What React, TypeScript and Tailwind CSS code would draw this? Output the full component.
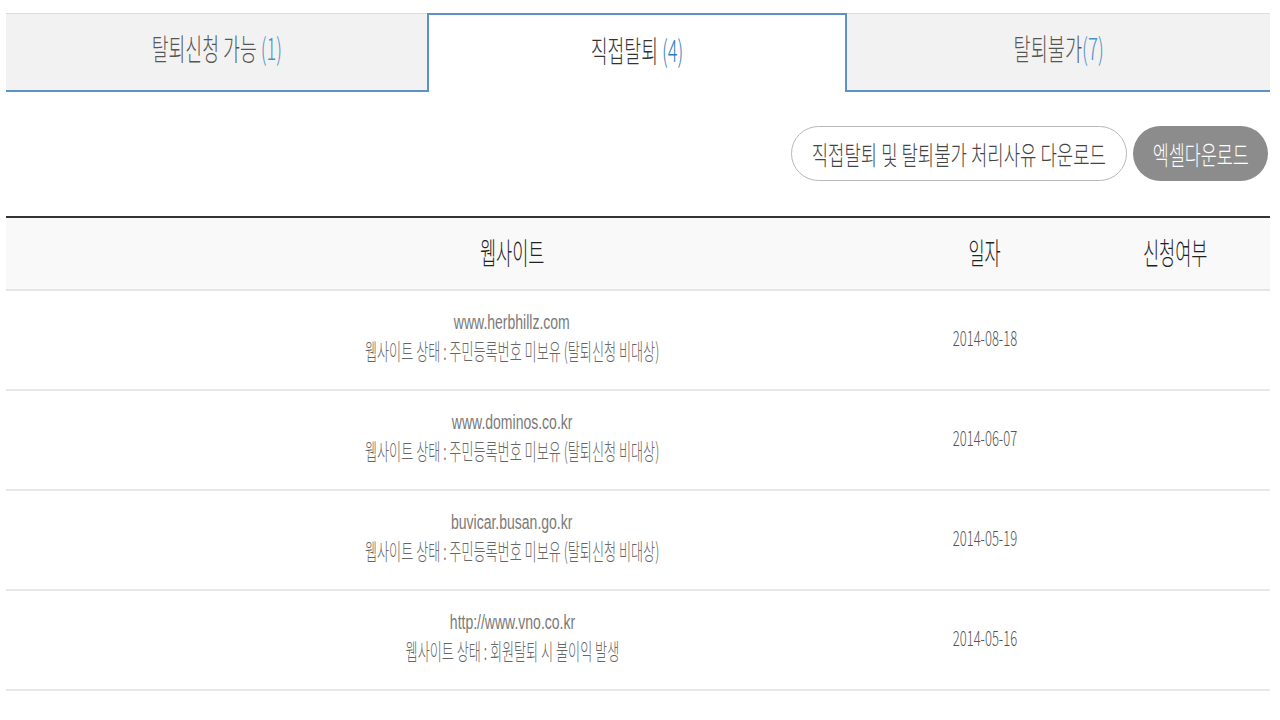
import React from "react";

const F = { fontFamily: '"Noto Sans CJK KR", "Noto Sans", sans-serif' };
const L = { fontFamily: '"Liberation Sans", Arial, sans-serif' };

function S({ children, className = "" }: { children: React.ReactNode; className?: string }) {
  return (
    <span className={"inline-block whitespace-nowrap origin-center " + className}>
      {children}
    </span>
  );
}

const rows = [
  { url: "www.herbhillz.com", status: "웹사이트 상태 : 주민등록번호 미보유 (탈퇴신청 비대상)", date: "2014-08-18" },
  { url: "www.dominos.co.kr", status: "웹사이트 상태 : 주민등록번호 미보유 (탈퇴신청 비대상)", date: "2014-06-07" },
  { url: "buvicar.busan.go.kr", status: "웹사이트 상태 : 주민등록번호 미보유 (탈퇴신청 비대상)", date: "2014-05-19" },
  { url: "http://www.vno.co.kr", status: "웹사이트 상태 : 회원탈퇴 시 불이익 발생", date: "2014-05-16" },
];

export default function App() {
  return (
    <div className="w-[1280px] h-[720px] overflow-hidden bg-white pl-[6px] pr-[10px] font-light" style={F}>
      {/* Tabs */}
      <div className="mt-[13px] flex h-[79px]">
        <div className="w-[421px] flex items-center justify-center pb-[11px] bg-[#f2f2f2] border-t border-t-[#dcdcdc] border-b-2 border-b-[#5b93c5] text-[#555] text-[30px] leading-none">
          <S className="scale-x-[0.61]">
            탈퇴신청 가능 <span className="text-[#4a90c8]">(1)</span>
          </S>
        </div>
        <div className="w-[420px] flex items-center justify-center pb-[9px] bg-white border-2 border-b-0 border-[#5b93c5] text-[#333] text-[30px] leading-none">
          <S className="scale-x-[0.61]">
            직접탈퇴 <span className="text-[#2f7fc0]">(4)</span>
          </S>
        </div>
        <div className="flex-1 flex items-center justify-center pb-[11px] bg-[#f2f2f2] border-t border-t-[#dcdcdc] border-b-2 border-b-[#5b93c5] text-[#555] text-[30px] leading-none">
          <S className="scale-x-[0.62]">
            탈퇴불가<span className="text-[#4a90c8]">(7)</span>
          </S>
        </div>
      </div>

      {/* Buttons */}
      <div className="mt-[34px] flex justify-end gap-[6px] pr-[2px]">
        <div className="w-[336px] h-[55px] rounded-full border border-[#b8b8b8] bg-white flex items-center justify-center text-[26px] text-[#444] leading-none">
          <S className="scale-x-[0.685]">직접탈퇴 및 탈퇴불가 처리사유 다운로드</S>
        </div>
        <div className="w-[135px] h-[55px] rounded-full bg-[#8c8c8c] flex items-center justify-center text-[26px] text-white leading-none">
          <S className="scale-x-[0.67]">엑셀다운로드</S>
        </div>
      </div>

      {/* Table */}
      <div className="mt-[35px] border-t-2 border-t-[#333]">
        <div className="grid grid-cols-[128px_756px_190px_190px] h-[73px] pb-[5px] bg-[#f9f9f9] border-b-2 border-b-[#e6e6e6] items-center text-[30px] text-[#222] leading-none">
          <div />
          <div className="text-center"><S className="scale-x-[0.585]">웹사이트</S></div>
          <div className="text-center"><S className="scale-x-[0.585]">일자</S></div>
          <div className="text-center"><S className="scale-x-[0.585]">신청여부</S></div>
        </div>
        {rows.map((r) => (
          <div
            key={r.url}
            className="grid grid-cols-[128px_756px_190px_190px] h-[100px] border-b-2 border-b-[#e8e8e8] items-center"
          >
            <div />
            <div className="flex flex-col items-center gap-[6px] text-[#666] leading-none pb-[8px]">
              <div className="text-[20px] leading-[22px] text-[#7a7a7a]" style={L}>
                <S className="scale-x-[0.7]">{r.url}</S>
              </div>
              <div className="text-[23px]"><S className="scale-x-[0.57]">{r.status}</S></div>
            </div>
            <div className="text-center text-[21px] text-[#555] leading-none pb-[6px]">
              <S className="scale-x-[0.62]">{r.date}</S>
            </div>
            <div />
          </div>
        ))}
      </div>
    </div>
  );
}
